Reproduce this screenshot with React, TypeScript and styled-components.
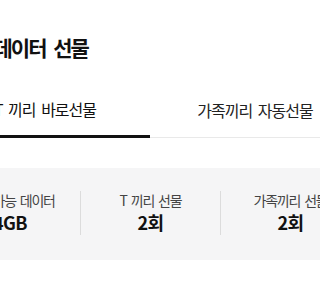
import React from 'react';
import styled, { createGlobalStyle } from 'styled-components';

const GlobalStyle = createGlobalStyle`
    html, body {
        margin: 0;
        padding: 0;
        background: #ffffff;
        overflow: hidden;
    }
    body {
        font-family: 'Noto Sans CJK KR', 'Noto Sans', sans-serif;
        color: #111111;
    }
`;

const Page = styled.div`
    width: 420px;
    margin-left: -60px;
`;

const Title = styled.h1`
    margin: 0;
    padding: 32px 0 0 0;
    font-size: 21px;
    line-height: 30px;
    font-weight: 700;
    letter-spacing: -2px;
    word-spacing: 5px;
    color: #111111;
`;

const TabList = styled.div`
    display: grid;
    grid-template-columns: 1fr 1fr;
    margin-top: 21px;
`;

interface TabProps {
    readonly $active?: boolean;
}

const Tab = styled.div<TabProps>`
    display: flex;
    justify-content: center;
    align-items: center;
    height: ${(props) => (props.$active ? 52 : 54)}px;
    font-size: 16px;
    letter-spacing: -1px;
    word-spacing: 3px;
    font-weight: 400;
    color: ${(props) => (props.$active ? '#111111' : '#222222')};
    border-bottom: ${(props) => (props.$active ? '3px solid #111111' : '1px solid #e9e9e9')};
`;

const Summary = styled.div`
    display: grid;
    grid-template-columns: repeat(3, 140px);
    margin-top: 30px;
    padding: 23px 0 25px;
    background: #f5f5f6;
    border-radius: 12px;
`;

interface ItemProps {
    readonly $divided?: boolean;
}

const Item = styled.div<ItemProps>`
    display: flex;
    flex-direction: column;
    align-items: center;
    border-left: ${(props) => (props.$divided ? '1px solid #dcdcdc' : 'none')};
`;

const Label = styled.span`
    font-size: 14px;
    line-height: 18px;
    letter-spacing: -1.2px;
    word-spacing: 2px;
    color: #444444;
`;

const Value = styled.strong`
    font-size: 18px;
    line-height: 26px;
    font-weight: 700;
    letter-spacing: -0.6px;
    color: #111111;
`;

const items = [
    { label: '선물 가능 데이터', value: '4GB' },
    { label: 'T 끼리 선물', value: '2회' },
    { label: '가족끼리 선물', value: '2회' },
];

const App = () => {
    return (
        <>
            <GlobalStyle />
            <Page>
                <Title>T끼리 데이터 선물</Title>
                <TabList>
                    <Tab $active>T 끼리 바로선물</Tab>
                    <Tab>가족끼리 자동선물</Tab>
                </TabList>
                <Summary>
                    {items.map((item, i) => (
                        <Item key={item.label} $divided={i > 0}>
                            <Label>{item.label}</Label>
                            <Value>{item.value}</Value>
                        </Item>
                    ))}
                </Summary>
            </Page>
        </>
    );
};

export default App;
